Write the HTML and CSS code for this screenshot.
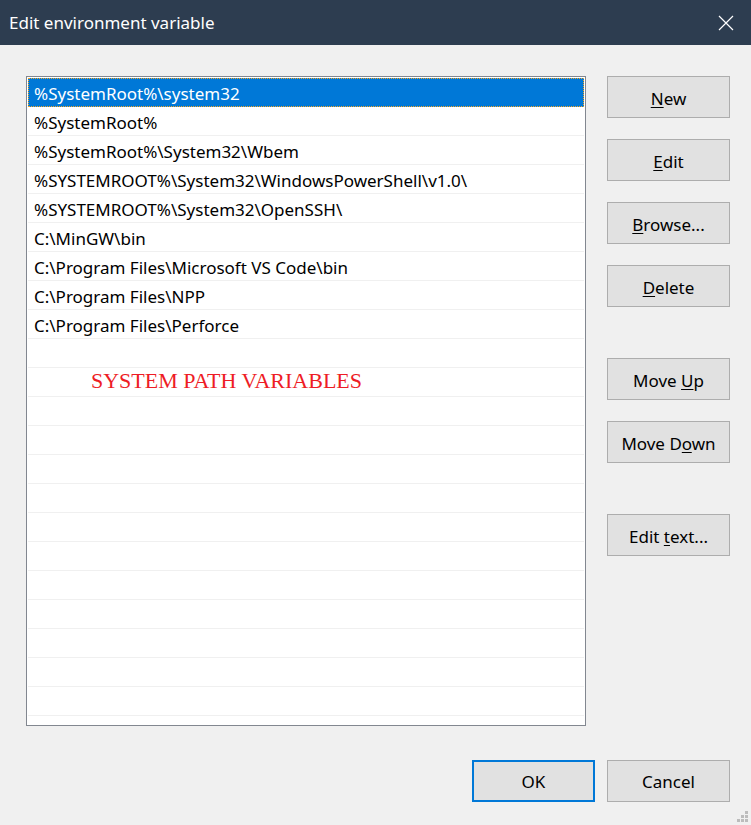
FILE: index.html
```html
<!DOCTYPE html>
<html lang="en">
<head>
  <meta charset="UTF-8" />
  <title>Edit environment variable</title>
  <link rel="stylesheet" href="styles.css">
</head>
<body>
  <div class="dialog">
    <div class="title-bar">
      <span class="title">Edit environment variable</span>
      <svg class="close-icon" width="16" height="16" viewBox="0 0 16 16">
        <path d="M1 1 L15 15 M15 1 L1 15" stroke="#ffffff" stroke-width="1.2" fill="none" />
      </svg>
    </div>

    <div class="main">
      <div class="list-box">
        <div class="row selected">%SystemRoot%\system32</div>
        <div class="row">%SystemRoot%</div>
        <div class="row">%SystemRoot%\System32\Wbem</div>
        <div class="row">%SYSTEMROOT%\System32\WindowsPowerShell\v1.0\</div>
        <div class="row">%SYSTEMROOT%\System32\OpenSSH\</div>
        <div class="row">C:\MinGW\bin</div>
        <div class="row">C:\Program Files\Microsoft VS Code\bin</div>
        <div class="row">C:\Program Files\NPP</div>
        <div class="row">C:\Program Files\Perforce</div>
        <div class="row"></div>
        <div class="row"></div>
        <div class="row"></div>
        <div class="row"></div>
        <div class="row"></div>
        <div class="row"></div>
        <div class="row"></div>
        <div class="row"></div>
        <div class="row"></div>
        <div class="row"></div>
        <div class="row"></div>
        <div class="row"></div>
        <div class="row"></div>
        <div class="row"></div>

        <!-- annotation written over the list -->
        <div class="note">SYSTEM PATH VARIABLES</div>
      </div>

      <div class="side-buttons">
        <div class="btn-group">
          <button class="btn"><u>N</u>ew</button>
          <button class="btn"><u>E</u>dit</button>
          <button class="btn"><u>B</u>rowse...</button>
          <button class="btn"><u>D</u>elete</button>
        </div>
        <div class="btn-group">
          <button class="btn">Move <u>U</u>p</button>
          <button class="btn">Move D<u>o</u>wn</button>
        </div>
        <div class="btn-group">
          <button class="btn">Edit <u>t</u>ext...</button>
        </div>
      </div>
    </div>

    <div class="footer">
      <button class="btn default">OK</button>
      <button class="btn">Cancel</button>
    </div>

    <svg class="grip" width="12" height="12" viewBox="0 0 12 12">
      <rect x="8" y="0" width="3" height="3" fill="#bcbcbc" />
      <rect x="4" y="4" width="3" height="3" fill="#bcbcbc" />
      <rect x="8" y="4" width="3" height="3" fill="#bcbcbc" />
      <rect x="0" y="8" width="3" height="3" fill="#bcbcbc" />
      <rect x="4" y="8" width="3" height="3" fill="#bcbcbc" />
      <rect x="8" y="8" width="3" height="3" fill="#bcbcbc" />
    </svg>
  </div>
</body>
</html>
```

FILE: styles.css
```css
:root {
  --title-bg: #2d3d50;
  --window-bg: #f0f0f0;
  --select-blue: #0078d7;
  --btn-bg: #e1e1e1;
  --btn-border: #adadad;
  --list-border: #828790;
  --row-line: #f0f0f0;
}

body {
  margin: 0;
  font-family: 'Noto Sans', 'Open Sans', sans-serif;
  font-size: 17px;
  color: #000;
}

.dialog {
  position: relative;
  width: 751px;
  height: 825px;
  background-color: var(--window-bg);
  overflow: hidden;
}

.title-bar {
  height: 45px;
  background-color: var(--title-bg);
  display: flex;
  align-items: center;
  justify-content: space-between;
  padding: 0 17px 0 9px;
}

.title {
  color: #fff;
  font-size: 17px;
}

.main {
  display: flex;
  gap: 21px;
  padding: 31px 21px 0 26px;
}

.list-box {
  position: relative;
  box-sizing: border-box;
  width: 560px;
  height: 650px;
  border: 1px solid var(--list-border);
  background-color: #fff;
  padding: 1px;
  overflow: hidden;
}

.row {
  box-sizing: border-box;
  height: 29px;
  padding: 5px 0 0 6px;
  line-height: 22px;
  border-bottom: 1px solid var(--row-line);
  white-space: nowrap;
}

.row.selected {
  background-color: var(--select-blue);
  color: #fff;
  outline: 1px dotted #f5a623;
  outline-offset: -1px;
  border-bottom-color: var(--select-blue);
}

.note {
  position: absolute;
  left: 64px;
  top: 291px;
  font-family: 'Liberation Serif', serif;
  font-size: 22px;
  color: #ee1c25;
}

.side-buttons {
  display: flex;
  flex-direction: column;
  gap: 51px;
}

.btn-group {
  display: flex;
  flex-direction: column;
  gap: 21px;
}

.btn {
  box-sizing: border-box;
  width: 123px;
  height: 42px;
  background-color: var(--btn-bg);
  border: 1px solid var(--btn-border);
  font-family: 'Noto Sans', 'Open Sans', sans-serif;
  font-size: 17px;
  color: #000;
  padding: 2px 0 0;
}

.btn u {
  text-underline-offset: 2px;
}

.btn.default {
  border: 2px solid var(--select-blue);
}

.footer {
  display: flex;
  justify-content: flex-end;
  gap: 12px;
  padding: 34px 21px 0 0;
}

.footer .btn {
  padding-top: 0;
}

.grip {
  position: absolute;
  right: 2px;
  bottom: 2px;
}
```
